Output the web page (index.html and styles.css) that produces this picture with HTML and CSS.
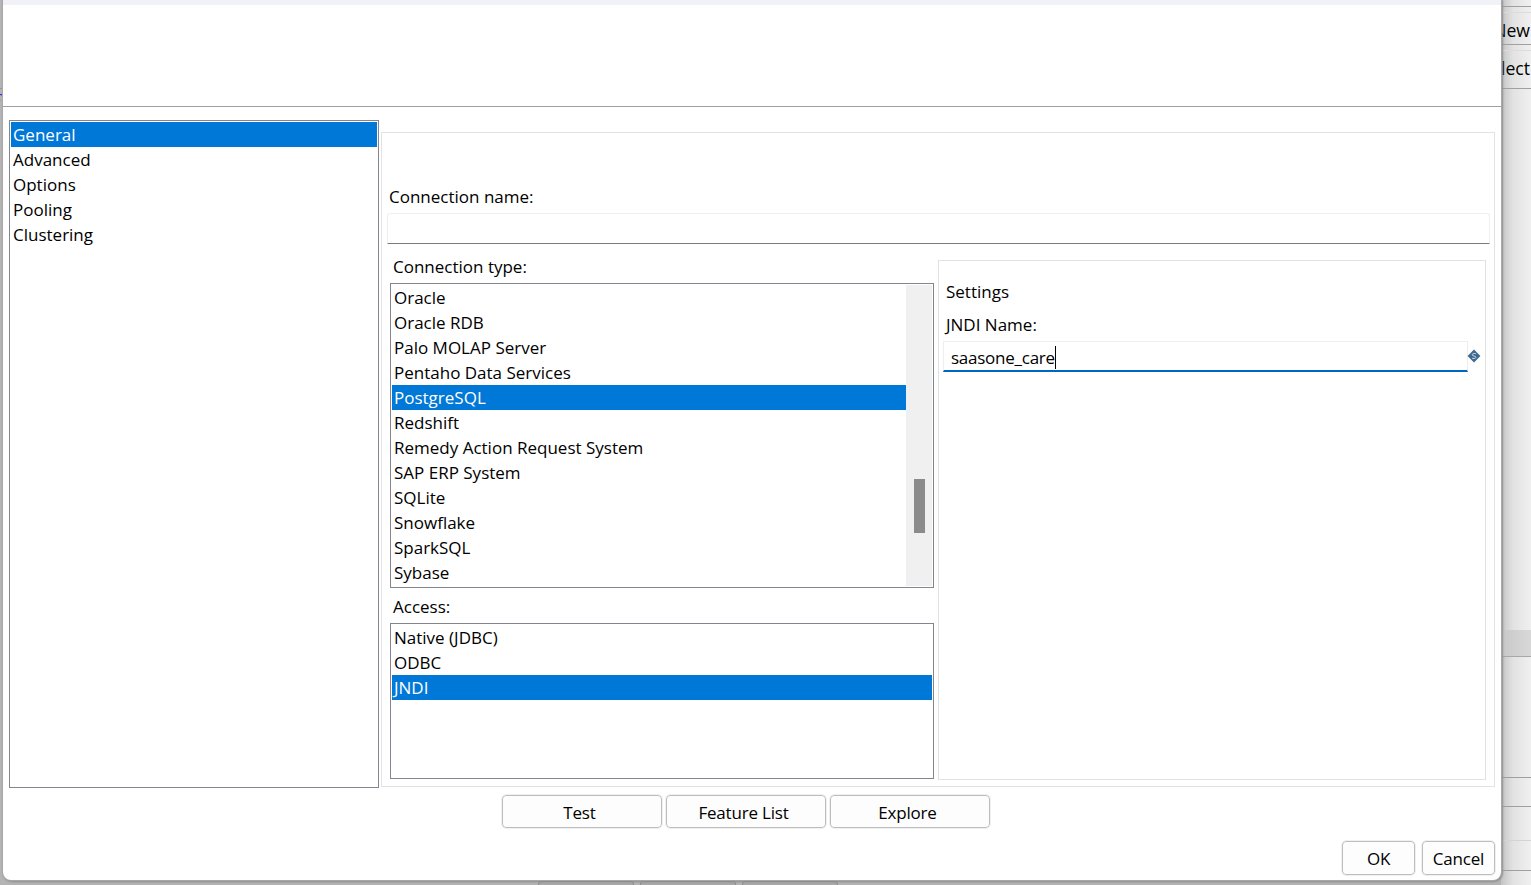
FILE: index.html
```html
<!DOCTYPE html>
<html lang="en">
<head>
<meta charset="utf-8">
<title>Database Connection</title>
<link rel="stylesheet" href="styles.css">
</head>
<body>
<div class="screen">
  <div class="backdrop">
    <div class="side">
      <div class="side-row r1"></div>
      <div class="side-row r2"><span>New</span></div>
      <div class="side-row r3"><span>Select</span></div>
      <div class="side-band"></div>
      <div class="side-line l1"></div>
      <div class="side-line l2"></div>
      <div class="side-line l3"></div>
      <div class="side-line l4"></div>
    </div>
    <div class="under-tabs"><i></i><i></i><i></i></div>
    <div class="left-line"></div>
    <div class="left-char">r</div>
  </div>

  <div class="dialog">
    <div class="titlebar"></div>
    <div class="header"></div>
    <div class="main">
      <ul class="list nav">
        <li class="sel">General</li>
        <li>Advanced</li>
        <li>Options</li>
        <li>Pooling</li>
        <li>Clustering</li>
      </ul>
      <div class="panel">
        <div class="label name-label">Connection name:</div>
        <div class="name-input"></div>
        <div class="columns">
          <div class="left-col">
            <div class="label col-label">Connection type:</div>
            <div class="list types">
              <ul class="type-items">
                <li>Oracle</li>
                <li>Oracle RDB</li>
                <li>Palo MOLAP Server</li>
                <li>Pentaho Data Services</li>
                <li class="sel">PostgreSQL</li>
                <li>Redshift</li>
                <li>Remedy Action Request System</li>
                <li>SAP ERP System</li>
                <li>SQLite</li>
                <li>Snowflake</li>
                <li>SparkSQL</li>
                <li>Sybase</li>
              </ul>
              <div class="scrollbar"><div class="thumb"></div></div>
            </div>
            <div class="label col-label access-label">Access:</div>
            <ul class="list access">
              <li>Native (JDBC)</li>
              <li>ODBC</li>
              <li class="sel">JNDI</li>
            </ul>
          </div>
          <div class="settings">
            <div class="label settings-title">Settings</div>
            <div class="label jndi-label">JNDI Name:</div>
            <div class="jndi-row">
              <div class="jndi-input"><span class="jndi-text">saasone_care</span><span class="caret"></span></div>
              <svg class="var-icon" width="14" height="14" viewBox="0 0 14 14" aria-hidden="true">
                <path d="M7 .6 13.4 7 7 13.4 .6 7z" fill="#3d6a91"/>
                <path d="M9 4.9C8.4 4.3 5.2 4.1 5.2 5.8 5.2 7.5 8.9 6.6 8.9 8.3 8.9 9.9 5.6 9.7 5 9.1" fill="none" stroke="#c9d7e3" stroke-width="1"/>
              </svg>
            </div>
          </div>
        </div>
      </div>
    </div>
    <div class="actions">
      <button class="btn wide">Test</button>
      <button class="btn wide">Feature List</button>
      <button class="btn wide">Explore</button>
    </div>
    <div class="footer">
      <button class="btn small">OK</button>
      <button class="btn small">Cancel</button>
    </div>
  </div>
</div>
</body>
</html>
```
FILE: styles.css
```css
* { box-sizing: border-box; }
html, body { margin: 0; padding: 0; }
body { font-family: "Open Sans", "Noto Sans", "Liberation Sans", sans-serif; color: #000; overflow: hidden; }
ul { list-style: none; margin: 0; padding: 0; }

.screen { position: relative; width: 1531px; height: 885px; overflow: hidden; background: #b4b4b4; }

/* Window behind the dialog */
.backdrop { position: absolute; inset: 0; }
.side { position: absolute; left: 1501px; top: 0; width: 30px; height: 885px; background: linear-gradient(90deg, #c4c4c4 0, #e2e2e2 12px, #f0f0f0 30px); overflow: hidden; }
.side-row { border-bottom: 1px solid #a0a0a0; font-size: 17.6px; white-space: nowrap; padding-right: 1px; overflow: hidden; display: flex; justify-content: flex-end; }
.side-row.r1 { height: 7px; }
.side-row.r2 { height: 33px; border-top: 1px solid #dcdcdc; margin-top: 5px; line-height: 34px; }
.side-row.r3 { height: 39px; border-top: 1px solid #dcdcdc; margin-top: 5px; line-height: 34px; }
.side-band { position: absolute; left: 0; right: 0; top: 630px; height: 27px; background: linear-gradient(90deg, #c8c8c8, #d8d8d8); border-bottom: 1px solid #a8a8a8; }
.side-line { position: absolute; left: 0; right: 0; height: 1px; background: #a0a0a0; }
.l1 { top: 777px; }
.l2 { top: 806px; }
.l3 { top: 840px; background: #d4d4d4; }
.l4 { top: 870px; }
.under-tabs { position: absolute; left: 538px; top: 881px; display: flex; gap: 6px; }
.under-tabs i { display: block; width: 96px; height: 6px; border: 1px solid #8c8c8c; border-radius: 3px 3px 0 0; background: #a8a8a8; }
.left-line { position: absolute; left: 0; top: 88px; width: 3px; height: 1px; background: #999; }
.left-char { position: absolute; left: -3px; top: 89px; width: 6px; height: 18px; overflow: hidden; color: #0000ee; font-size: 14px; line-height: 16px; font-family: "Liberation Serif", serif; }

/* Dialog */
.dialog { position: absolute; left: 3px; top: 0; width: 1498px; height: 880px; background: #fff; border-radius: 0 0 8px 8px; box-shadow: 0 0 0 1px #a8a8a8, 1px 1px 2px 1px #8e8e8e; display: flex; flex-direction: column; font-size: 17px; }
.titlebar { height: 5px; background: #f0f2f8; }
.header { height: 102px; border-bottom: 1px solid #a0a0a0; flex: none; }
.main { display: flex; align-items: flex-start; padding: 13px 0 0 6px; }

.label { line-height: 23px; height: 25px; white-space: nowrap; }
.list { border: 1px solid #85858f; background: #fff; }
.list li { height: 25px; line-height: 25px; padding-left: 2px; white-space: nowrap; }
.list li.sel { background: #0078d7; color: #fff; }

.nav { width: 370px; height: 668px; padding: 1px; }
.panel { width: 1114px; height: 655px; margin: 12px 0 0 2px; border: 1px solid #e2e2e2; padding: 52px 0 0 5px; }
.name-label { margin-left: 2px; }
.name-input { width: 1103px; height: 31px; margin-top: 3px; border: 1px solid #efefef; border-bottom: 1px solid #7a7a7a; border-radius: 3px 3px 0 0; }

.columns { display: flex; align-items: flex-start; margin: 11px 0 0 3px; gap: 4px; }
.left-col { width: 544px; }
.col-label { margin-left: 3px; }
.types { display: flex; height: 305px; margin-top: 3px; padding: 1px 1px 1px; }
.type-items { width: 515px; }
.scrollbar { width: 26px; height: 100%; background: #f0f0f0; padding: 194px 0 0 8px; }
.thumb { width: 11px; height: 54px; background: #8b8b8b; }
.access-label { margin-top: 7px; }
.access { height: 156px; margin-top: 3px; padding: 1px 1px 1px; }

.settings { width: 548px; height: 520px; margin-top: 5px; border: 1px solid #e2e2e2; padding: 18px 0 0 4px; }
.settings-title { margin-left: 3px; line-height: 25px; }
.jndi-label { margin: 8px 0 0 3px; line-height: 25px; }
.jndi-row { display: flex; align-items: center; margin-top: 4px; }
.jndi-input { width: 525px; height: 31px; border: 1px solid #eeeeee; border-bottom: 2px solid #0067c0; padding: 2px 0 0 7px; display: flex; align-items: center; letter-spacing: -0.25px; }
.caret { width: 1px; height: 23px; background: #000; flex: none; }
.var-icon { margin: 0 0 2px -1px; flex: none; }

.btn { font: inherit; color: #000; background: #fdfdfd; border: 1px solid #bdbdbd; border-radius: 4px; outline: 1px solid #f0f0f0; padding: 2px 5px 0 0; letter-spacing: -0.2px; }
.actions { display: flex; gap: 4px; margin: 7px 0 0 499px; }
.btn.wide { width: 160px; height: 33px; }
.footer { display: flex; justify-content: flex-end; gap: 7px; margin-top: 13px; padding-right: 6px; }
.btn.small { width: 73px; height: 34px; padding: 1px 0 0; }
```
